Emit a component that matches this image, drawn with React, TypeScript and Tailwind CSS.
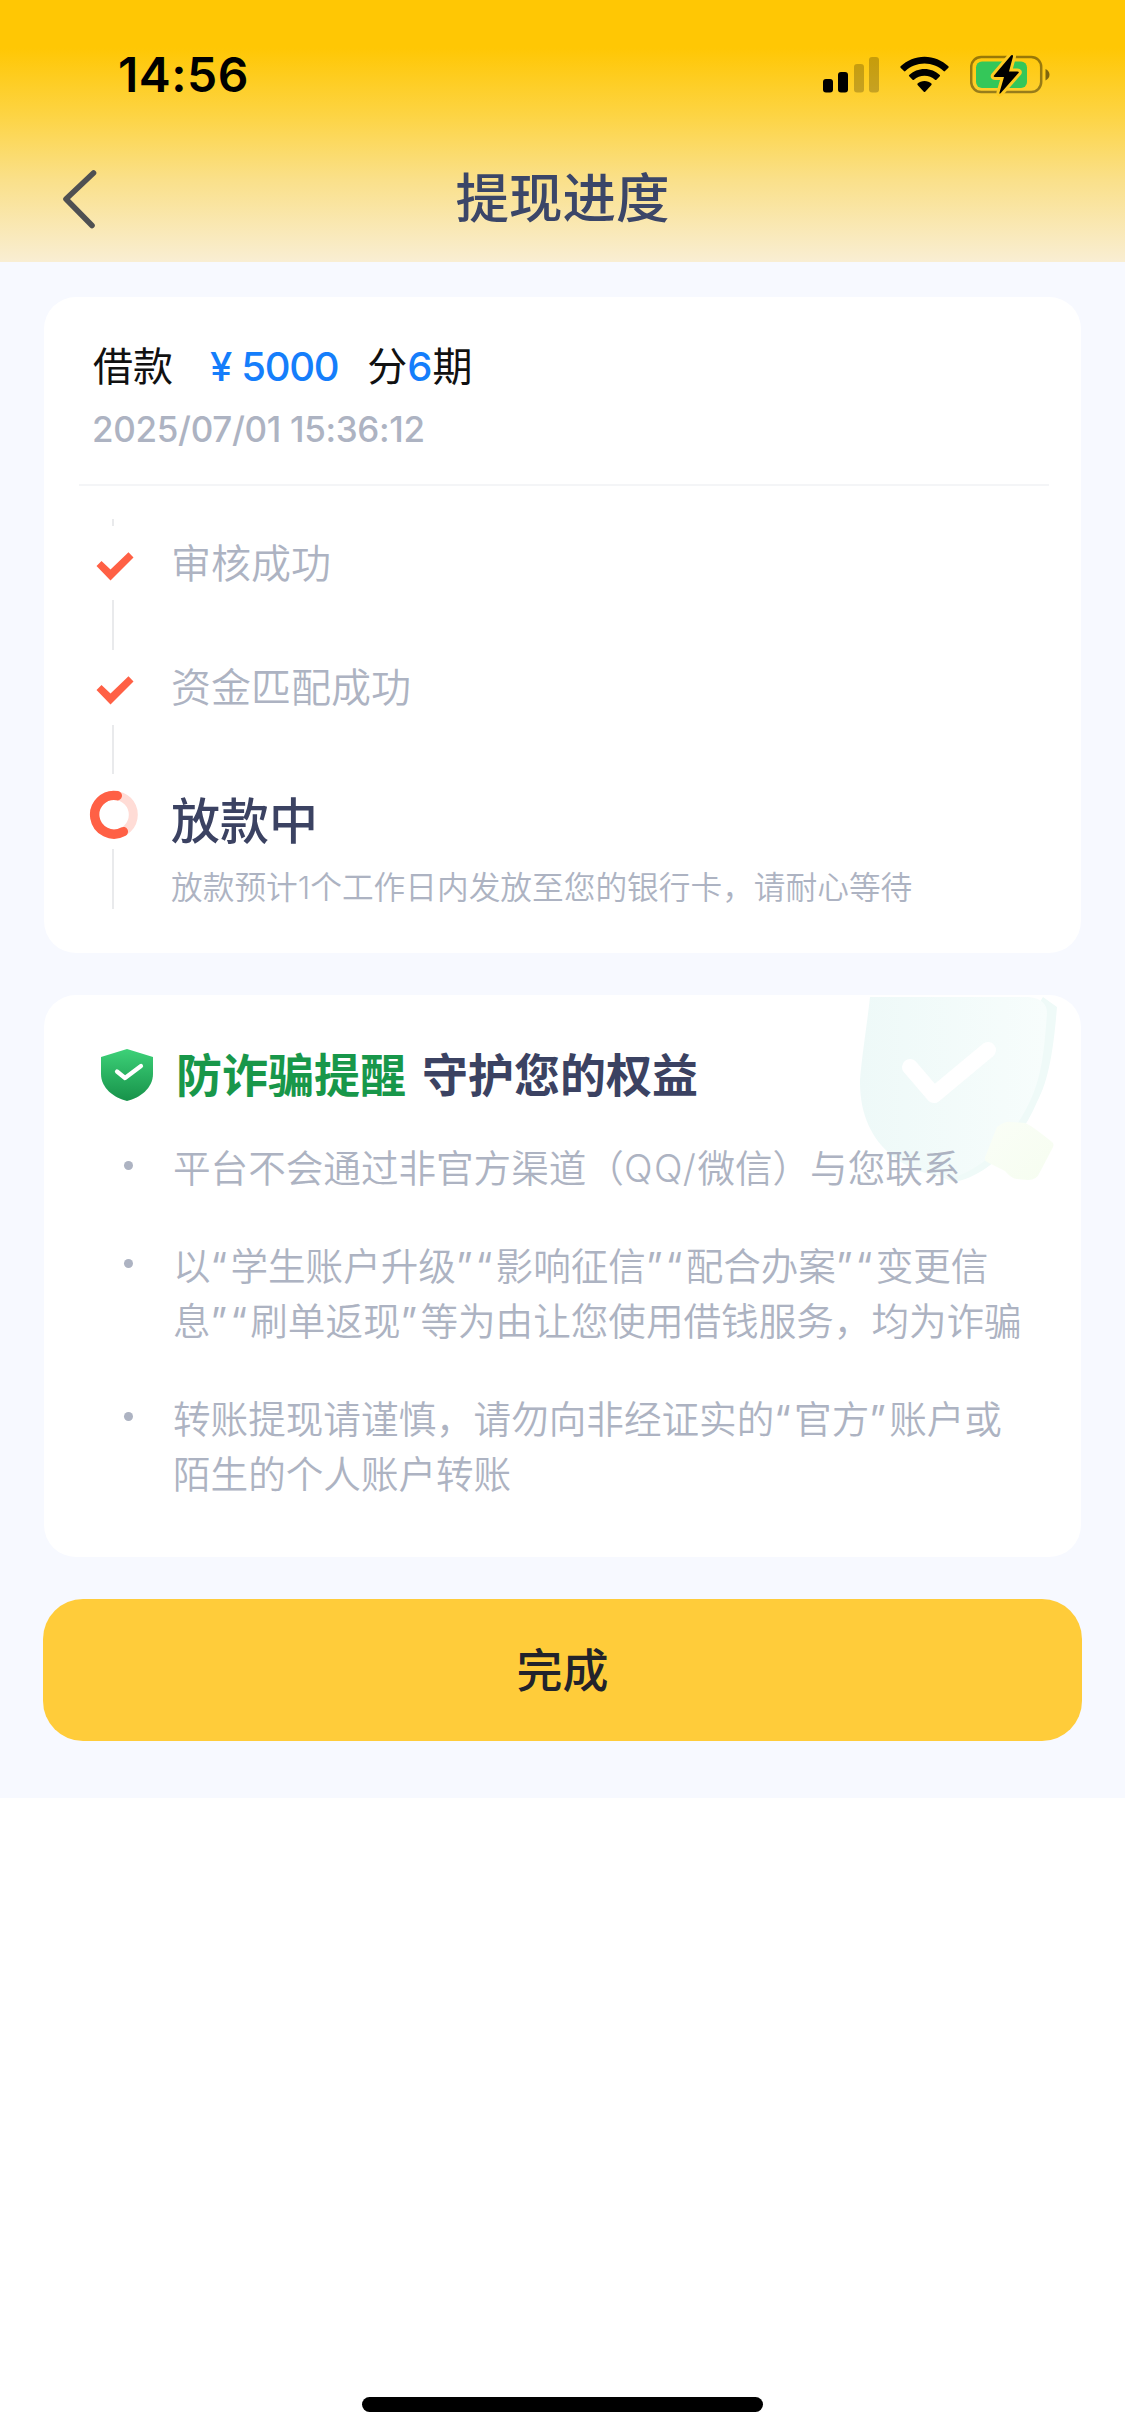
import { ReactNode } from "react";

type StepState = "done" | "doing";

interface Step {
  title: string;
  state: StepState;
  desc?: string;
}

const steps: Step[] = [
  { title: "审核成功", state: "done" },
  { title: "资金匹配成功", state: "done" },
  {
    title: "放款中",
    state: "doing",
    desc: "放款预计1个工作日内发放至您的银行卡，请耐心等待",
  },
];

const tips = [
  "平台不会通过非官方渠道（QQ/微信）与您联系",
  "以“学生账户升级”“影响征信”“配合办案”“变更信息”“刷单返现”等为由让您使用借钱服务，均为诈骗",
  "转账提现请谨慎，请勿向非经证实的“官方”账户或陌生的个人账户转账",
];

function StatusBar() {
  return (
    <div className="flex h-[136px] items-start justify-between pt-[55px] pr-[75px] pl-[118px]">
      <span className="text-[48px] leading-[40px] font-semibold tracking-[0.5px] text-black">
        14:56
      </span>
      <div className="flex items-start">
        <svg width="58" height="40" viewBox="0 0 58 40">
          <rect x="0" y="24" width="10" height="13.5" rx="3" />
          <rect x="15" y="17" width="10" height="20.5" rx="3" />
          <rect x="31" y="9" width="10" height="28.5" rx="3" opacity="0.22" />
          <rect x="46" y="2" width="10" height="35.5" rx="3" opacity="0.22" />
        </svg>
        <svg className="ml-[19px]" width="50" height="40" viewBox="0 0 50 40">
          <path d="M24.5 1.7C33.6 1.7 42 5.3 48.4 11.3Q49 12 48.4 12.7L45 16.1Q44.3 16.7 43.6 16.1C38.5 11.4 31.8 8.6 24.5 8.6S10.5 11.4 5.4 16.1Q4.7 16.7 4 16.1L.6 12.7Q0 12 .6 11.3C7 5.3 15.4 1.7 24.5 1.7Z" />
          <path d="M24.5 13.9C30.4 13.9 35.8 16.2 39.8 19.9Q40.5 20.6 39.8 21.3L36.4 24.7Q35.7 25.3 35 24.7C32.2 22.2 28.5 20.8 24.5 20.8S16.8 22.2 14 24.7Q13.3 25.3 12.6 24.7L9.2 21.3Q8.5 20.6 9.2 19.9C13.2 16.2 18.6 13.9 24.5 13.9Z" />
          <path d="M24.5 26C27.3 26 29.7 27 31.4 28.5Q32 29.2 31.4 29.9L25.2 36.7Q24.5 37.4 23.8 36.7L17.6 29.9Q17 29.2 17.6 28.5C19.3 27 21.7 26 24.5 26Z" />
        </svg>
        <svg className="ml-[20px]" width="80" height="42" viewBox="0 0 80 42">
          <rect x="1.2" y="2" width="70" height="35" rx="10" fill="none" stroke="#000" strokeOpacity="0.4" strokeWidth="2.5" />
          <path d="M75.5 14q4 2 4 5.7t-4 5.7z" fillOpacity="0.5" />
          <rect x="6" y="6.5" width="51" height="26.5" rx="6" fill="#34c759" />
          <path
            d="M41 .5 24 20.5q-1 1.5 1 1.5h9l-4.5 15.5q-.4 2 1.3.5L48.5 18q1-1.5-1-1.5h-8.500L43 1.500Q43-1 41 .5z"
            stroke="#fecb21"
            strokeWidth="6"
            paintOrder="stroke"
          />
        </svg>
      </div>
    </div>
  );
}

function NavBar() {
  return (
    <div className="grid h-[126px] grid-cols-[1fr_auto_1fr] items-start">
      <svg className="mt-[32px] ml-[61px]" width="38" height="62" viewBox="0 0 38 62">
        <path
          d="M32.5 5 5 31l26 26.5"
          fill="none"
          stroke="#4f5052"
          strokeWidth="5.6"
          strokeLinecap="round"
          strokeLinejoin="round"
        />
      </svg>
      <h1 className="mt-[33px] text-[53.5px] leading-[60px] font-medium text-[#3b4668]">提现进度</h1>
    </div>
  );
}

function StepIcon({ state }: { state: StepState }) {
  if (state === "done") {
    return (
      <svg width="50" height="50" viewBox="0 0 50 50">
        <path d="M7.5 24 12.5 19l9 8.5L39.5 10.2l5 5.3-23 23z" fill="#ff6045" />
      </svg>
    );
  }
  return (
    <svg width="50" height="50" viewBox="0 0 50 50">
      <circle cx="25" cy="24.7" r="19.3" fill="none" stroke="#ffdcd6" strokeWidth="9" />
      <path
        d="M28.3 5.7A19.3 19.3 0 1 0 34.3 41.6"
        fill="none"
        stroke="#ff6045"
        strokeWidth="9.4"
        strokeLinecap="round"
      />
    </svg>
  );
}

function Line({ className }: { className: string }) {
  return <div className={`mr-[2px] w-[2px] bg-[#e9eaec] ${className}`} />;
}

function Timeline() {
  const [first, second, current] = steps;

  return (
    <div className="flex pl-[45px]">
      <div className="flex w-[50px] flex-col items-center pt-[33px]">
        <Line className="h-[7px]" />
        <div className="mt-[16px] h-[50px]">
          <StepIcon state={first.state} />
        </div>
        <Line className="mt-[8px] h-[50px]" />
        <div className="mt-[16px] h-[50px]">
          <StepIcon state={second.state} />
        </div>
        <Line className="mt-[9px] h-[49px]" />
        <div className="mt-[16px] h-[50px]">
          <StepIcon state={current.state} />
        </div>
        <Line className="mt-[9px] h-[60px]" />
      </div>
      <div className="ml-[32px] pt-[48px] text-[#adb3c2]">
        <p className="text-[40px] leading-[60px] font-[350]">{first.title}</p>
        <p className="mt-[64px] text-[40px] leading-[60px] font-[350]">{second.title}</p>
        <p className="mt-[69px] text-[49px] leading-[70px] font-medium text-[#3b4262]">
          {current.title}
        </p>
        <p className="mt-[9px] text-[31.7px] leading-[44px] font-[350]">{current.desc}</p>
      </div>
    </div>
  );
}

function Card({ className, children }: { className: string; children: ReactNode }) {
  return (
    <section className={`relative mx-[44px] overflow-hidden rounded-[32px] bg-white ${className}`}>
      {children}
    </section>
  );
}

function LoanCard() {
  return (
    <Card className="mt-[35px] h-[656px]">
      <div className="flex items-center pt-[42px] pl-[49px] text-[40px] leading-[56px] text-[#111]">
        <span>借款</span>
        <span className="ml-[37px] font-medium text-[#157efb]">¥</span>
        <span className="ml-[9px] font-medium tracking-[-1.3px] text-[#157efb]">5000</span>
        <span className="ml-[29px]">
          分<span className="font-medium text-[#157efb]">6</span>期
        </span>
      </div>
      <p className="mt-[11px] pl-[48px] text-[35px] leading-[46px] font-medium tracking-[-0.33px] text-[#adb3c2]">
        2025/07/01 15:36:12
      </p>
      <div className="mt-[32px] mr-[32px] ml-[35px] h-[2px] bg-[#f4f5f7]" />
      <Timeline />
    </Card>
  );
}

function ShieldWatermark() {
  return (
    <svg className="absolute top-0 right-0" width="236" height="200" viewBox="0 0 236 200">
      <defs>
        <linearGradient id="wm" x1="0" y1="0" x2="1" y2="0">
          <stop offset="0" stopColor="#eef9f8" />
          <stop offset="1" stopColor="#f7fdfc" />
        </linearGradient>
        <linearGradient id="gem" x1="0" y1="0" x2="1" y2="1">
          <stop offset="0" stopColor="#fafef7" />
          <stop offset="1" stopColor="#f6fdf0" />
        </linearGradient>
      </defs>
      <path d="M198 2 212 12C209 48 205 83 192 107C178 140 150 178 110 187L90 180z" fill="#effaf8" />
      <path
        d="M25 2H184Q202 4 202 18C199 60 196 88 180 116C163 147 143 170 108 183C66 180 14 155 15 85C17 60 22 30 25 2z"
        fill="url(#wm)"
      />
      <path
        d="m65 72 24 28 54-45"
        fill="none"
        stroke="#fff"
        strokeWidth="16"
        strokeLinecap="round"
        strokeLinejoin="round"
      />
      <path
        d="M152 132q8-6 14-5l14 1q6 2 27 19 3 2 0 7l-12 23q-3 8-12 8l-11-1q-5 0-12-8l-18-9q-4-2-1-7z"
        fill="url(#gem)"
      />
    </svg>
  );
}

// Curly quotes and Latin runs are spaced out so they sit evenly between the Han characters.
function TipText({ text }: { text: string }) {
  return (
    <span>
      {text.split(/([“”]+|[A-Z/]+)/).map((part, i) => {
        if (/^[“”]/.test(part)) {
          return (
            <span key={i} className="font-normal tracking-[3.3px]">
              {part}
            </span>
          );
        }
        if (/^[A-Z]/.test(part)) {
          return (
            <span key={i} className="tracking-[1.6px]">
              {part}
            </span>
          );
        }
        return part;
      })}
    </span>
  );
}

function FraudCard() {
  return (
    <Card className="mt-[42px] h-[562px]">
      <ShieldWatermark />
      <div className="relative flex items-center pt-[51px] pl-[57px]">
        <svg width="52" height="52" viewBox="0 0 52 52">
          <defs>
            <linearGradient id="shield" x1="0" y1="0" x2="0" y2="1">
              <stop offset="0" stopColor="#3dd178" />
              <stop offset="1" stopColor="#17924a" />
            </linearGradient>
          </defs>
          <path d="M26 0 52 8V25C52 39 39 49 26 52C13 49 0 39 0 25V8z" fill="url(#shield)" />
          <path
            d="m16 22.5 8 6.5 16-12"
            fill="none"
            stroke="#fff"
            strokeWidth="4.2"
            strokeLinecap="round"
            strokeLinejoin="round"
          />
        </svg>
        <h2 className="ml-[23px] text-[46px] leading-[58px] font-bold text-[#18974a]">防诈骗提醒</h2>
        <span className="ml-[16px] text-[46px] leading-[58px] font-bold text-[#3b4262]">守护您的权益</span>
      </div>
      <ul className="relative mt-[37px] space-y-[43px] pr-[48px] pl-[80px] text-[37.6px] leading-[55px] font-[350] text-[#adb3c2]">
        {tips.map((tip) => (
          <li key={tip} className="flex">
            <i className="mt-[20px] mr-[40px] size-[9px] shrink-0 rounded-full bg-[#adb3c2]" />
            <TipText text={tip} />
          </li>
        ))}
      </ul>
    </Card>
  );
}

export default function App() {
  return (
    <main
      lang="zh-CN"
      className="flex h-[2435px] w-[1125px] flex-col bg-white font-['Inter','Noto_Sans_CJK_SC',sans-serif]"
    >
      <header className="h-[262px] bg-[linear-gradient(180deg,#ffc704_0px,#ffc704_48px,#fdd443_115px,#fae08a_180px,#f9eed3_262px)]">
        <StatusBar />
        <NavBar />
      </header>
      <div className="flow-root h-[1536px] bg-[#f7f9ff]">
        <LoanCard />
        <FraudCard />
        <button className="mx-[43px] mt-[42px] block h-[142px] w-[1039px] rounded-[40px] bg-[#ffcc3a] text-[46px] font-medium text-[#22232b]">
          完成
        </button>
      </div>
      <div className="mx-auto mt-auto mb-[23px] h-[15px] w-[401px] rounded-full bg-black" />
    </main>
  );
}
